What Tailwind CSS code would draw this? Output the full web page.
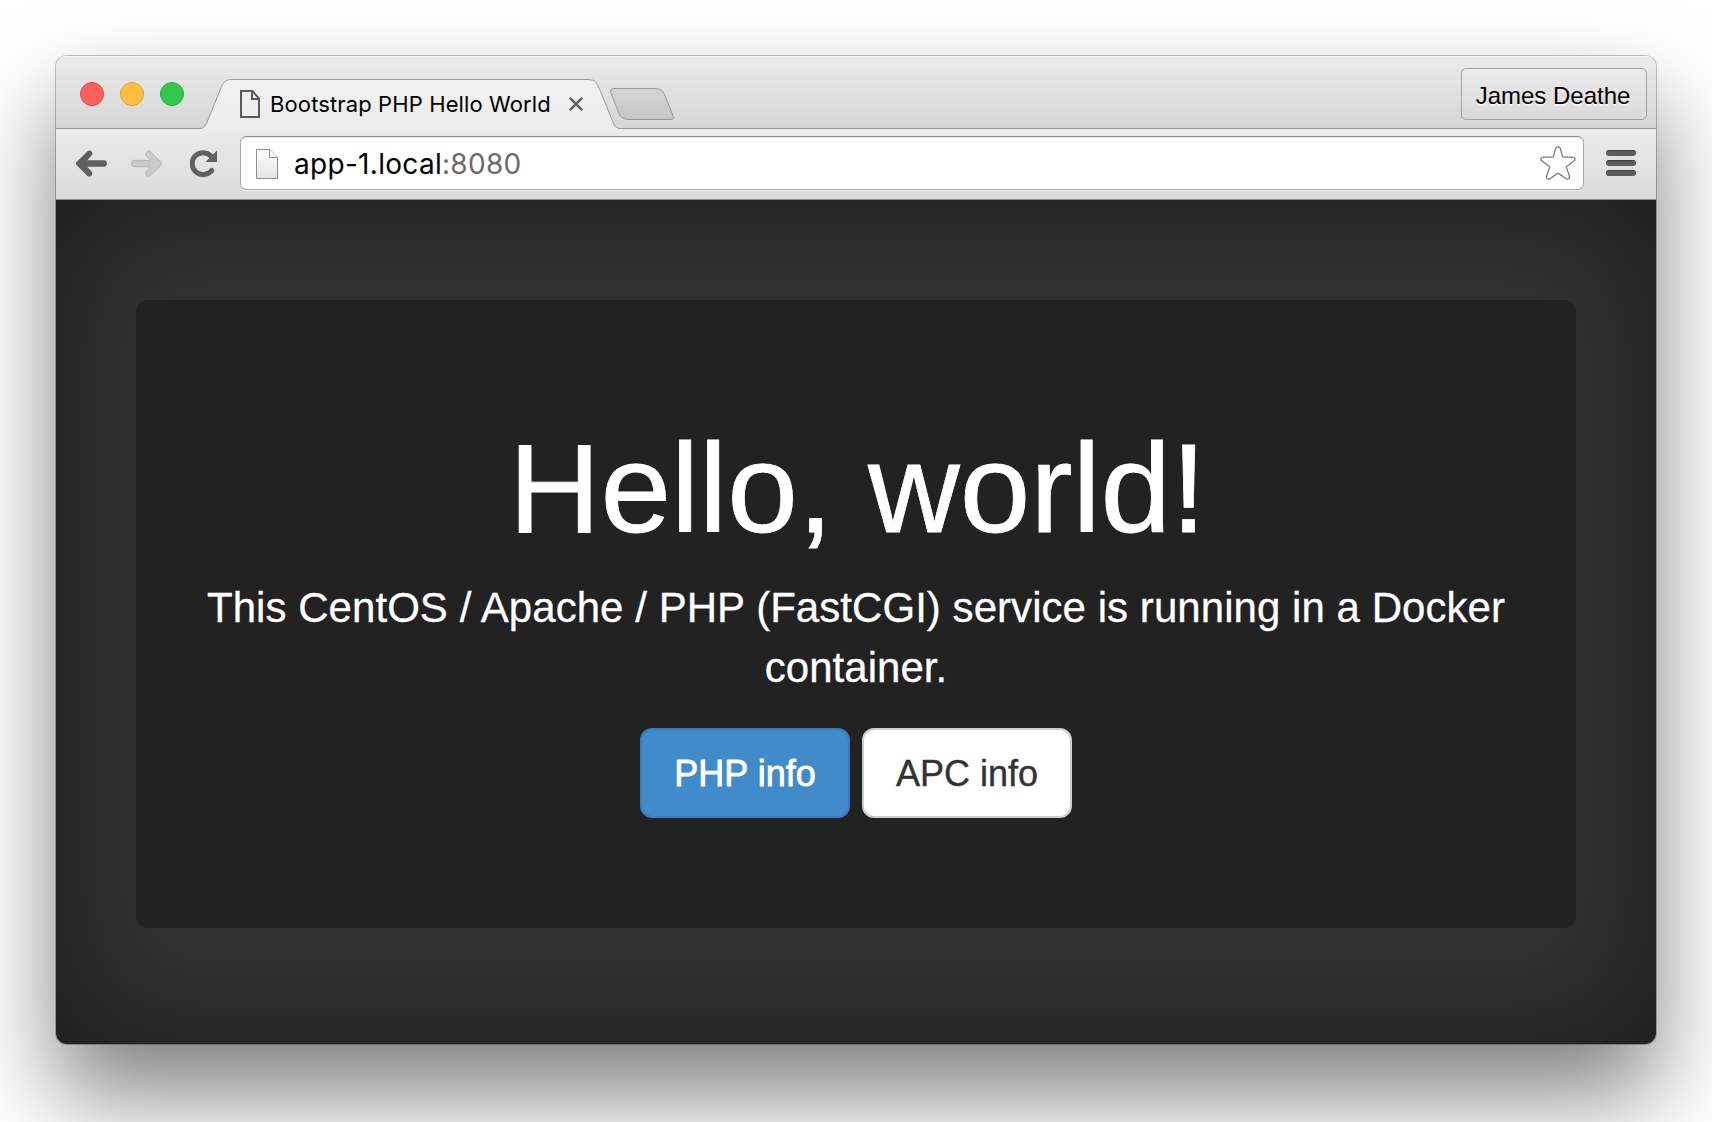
<!DOCTYPE html>
<html lang="en">
<head>
<meta charset="utf-8">
<title>Bootstrap PHP Hello World</title>
<script src="https://cdn.jsdelivr.net/npm/@tailwindcss/browser@4"></script>
</head>
<body class="h-[1122px] overflow-hidden bg-white px-14 pt-14">
<div class="flex h-[988px] w-[1600px] flex-col overflow-hidden rounded-[11px] shadow-[0_0_0_1px_rgba(0,0,0,0.24),0_50px_94px_rgba(0,0,0,0.5)]">

  <!-- title bar -->
  <header class="flex h-[73px] shrink-0 border-b border-[#999] bg-linear-to-b from-[#ebebeb] to-[#d6d6d6] pr-[9px] shadow-[inset_0_1px_0_#f4f4f4]">
    <div class="flex w-[144px] shrink-0 gap-4 pt-[26px] pl-6">
      <span class="size-6 rounded-full border border-[#e2463f] bg-[#fc615d]"></span>
      <span class="size-6 rounded-full border border-[#e0a032] bg-[#fdbe41]"></span>
      <span class="size-6 rounded-full border border-[#29ae36] bg-[#34c84a]"></span>
    </div>
    <div class="relative h-[73px] w-[422px] shrink-0">
      <svg class="absolute top-0 left-0" width="480" height="73" viewBox="200 56 480 73" fill="none">
        <defs>
          <linearGradient id="tab" x1="0" y1="80" x2="0" y2="129" gradientUnits="userSpaceOnUse"><stop stop-color="#f2f2f2"/><stop offset="1" stop-color="#ebebeb"/></linearGradient>
          <linearGradient id="nt" x1="0" y1="88" x2="0" y2="120" gradientUnits="userSpaceOnUse"><stop stop-color="#d3d3d3"/><stop offset="1" stop-color="#c8c8c8"/></linearGradient>
        </defs>
        <path d="M200 128.500C204 128.500 205.500 125.500 207.500 121L220.500 89C223.500 82 225.500 79.500 232 79.500H588C594.500 79.500 596.500 82 599.500 89L612.500 121C614.500 125.500 616 128.500 620 128.500V130H200Z" fill="url(#tab)"/>
        <path d="M200 128.500C204 128.500 205.500 125.500 207.500 121L220.500 89C223.500 82 225.500 79.500 232 79.500H588C594.500 79.500 596.500 82 599.500 89L612.500 121C614.500 125.500 616 128.500 620 128.500" stroke="#999"/>
        <path d="M614 88.500H655C660 88.500 662.500 90.500 664.500 94.500L673 115.500C674 118 673.500 119.500 671 119.500H629C623.500 119.500 621 117.500 619 113.500L611 93C610 90 611 88.500 614 88.500Z" fill="url(#nt)" stroke="#999"/>
      </svg>
      <div class="relative mt-[23px] flex h-[49px] items-center pl-10">
        <svg class="shrink-0" width="20" height="28" viewBox="0 0 20 28" fill="none" stroke="#5a5a5a" stroke-width="2"><path d="M1 1H12.500L19 8.500V27H1Z"/><path d="M12 1V9H19"/></svg>
        <span class="ml-[10px] w-[299px] whitespace-nowrap font-['Inter'] text-[22px] leading-7 tracking-[0.12px] text-black">Bootstrap PHP Hello World</span>
        <svg class="shrink-0" width="14" height="14" viewBox="0 0 14 14" stroke="#666" stroke-width="2.500" stroke-linecap="round"><path d="M1.500 1.500L12.500 12.500M12.500 1.500L1.500 12.500"/></svg>
      </div>
    </div>
    <button class="mt-3 ml-auto h-[52px] w-[186px] rounded-[5px] border border-[#a0a0a0] bg-linear-to-b from-[#ebebeb] to-[#dadada] pt-[4px] pr-[2px] font-['Liberation_Sans'] text-[24px] whitespace-nowrap text-black [text-shadow:0_2px_0_#f4f4f4]">James Deathe</button>
  </header>

  <!-- toolbar -->
  <nav class="flex h-[71px] shrink-0 items-start border-b border-[#8a8a8a] bg-linear-to-b from-[#ebebeb] to-[#dbdbdb] pt-[7px] pl-5">
    <svg class="mt-3.5 shrink-0" width="31" height="28" viewBox="0 0 31 28" fill="#606060"><path d="M.4 12.200L11.500 1.200C13.500-.600 16.800 1.200 16.300 4.200C16.200 5 15.700 5.600 15.200 6.100L11.300 10.300H28Q31 10.500 31 13.500Q31 16.600 28 16.800H11.300L15.200 21C15.700 21.500 16.200 22.100 16.300 22.900C16.800 25.900 13.500 27.700 11.500 25.900L.4 14.900Q-.800 13.500 .4 12.200Z"/></svg>
    <svg class="mt-3.5 ml-6 shrink-0" width="31" height="28" viewBox="-.500 0 32 28" fill="#cbcbcb" stroke="#b4b4b4"><path transform="matrix(-1 0 0 1 31 0)" d="M.4 12.200L11.500 1.200C13.500-.600 16.800 1.200 16.300 4.200C16.200 5 15.700 5.600 15.200 6.100L11.300 10.300H28Q31 10.500 31 13.500Q31 16.600 28 16.800H11.300L15.200 21C15.700 21.500 16.200 22.100 16.300 22.900C16.800 25.900 13.500 27.700 11.500 25.900L.4 14.900Q-.800 13.500 .4 12.200Z"/></svg>
    <svg class="mt-3.5 ml-7 shrink-0" width="28" height="28" viewBox="0 0 28 28" fill="none"><path d="M21.700 20.500A11 11 0 1 1 21 6" stroke="#606060" stroke-width="5" stroke-linecap="round"/><path d="M27 .500V12H15.500Z" fill="#606060"/></svg>
    <div class="ml-[22px] flex h-[54px] w-[1344px] shrink-0 items-center rounded-[6px] border border-[#a6a6a6] border-t-[#8f8f8f] bg-white pr-[7px] pl-[15px] shadow-[0_1px_0_#f2f2f2,inset_0_1px_0_#e8e8e8]">
      <svg class="mt-px shrink-0" width="22" height="30" viewBox="0 0 22 30"><defs><linearGradient id="pg" x1="0" y1="0" x2="0" y2="1"><stop stop-color="#fff"/><stop offset="1" stop-color="#e4e4e4"/></linearGradient></defs><path d="M.500 .500H14L21.500 8.500V29.500H.500Z" fill="url(#pg)" stroke="#8f8f8f"/><path d="M13.500 .500V8.500H21.500" fill="#fff" stroke="#8f8f8f"/></svg>
      <span class="ml-4 pt-[2px] whitespace-nowrap font-['Inter'] text-[28px] leading-8 tracking-[0.3px] text-black">app-1.local<span class="text-[#6b6b6b]">:8080</span></span>
      <svg class="ml-auto shrink-0" width="36" height="34" viewBox="0 0 36 34" fill="#fff" stroke="#7c7c7c" stroke-width="1.300" stroke-linejoin="round"><path d="M15.600 2.600Q18-1.200 20.400 2.600L22.500 10.400Q22.800 11.200 23.700 11.200H32.500Q36.600 12 34 15L26.800 20.200Q26.200 20.700 26.400 21.400L29.500 30.300Q29.600 34 26 32.800L18.800 27.600Q18 27.200 17.200 27.600L10 32.800Q6.400 34 6.500 30.300L9.600 21.400Q9.800 20.700 9.200 20.200L2 15Q-.600 12 3.500 11.200H12.300Q13.200 11.200 13.500 10.400Z"/></svg>
    </div>
    <div class="mt-3.5 ml-[22px] flex flex-col gap-1">
      <span class="h-1.5 w-[30px] rounded-full border-t border-[#404040] bg-[#5c5c5c]"></span>
      <span class="h-1.5 w-[30px] rounded-full border-t border-[#404040] bg-[#5c5c5c]"></span>
      <span class="h-1.5 w-[30px] rounded-full border-t border-[#404040] bg-[#5c5c5c]"></span>
    </div>
  </nav>

  <!-- page -->
  <main class="grow bg-[#333] px-20 pt-[100px] font-['Liberation_Sans'] shadow-[inset_0_0_140px_rgba(0,0,0,0.5)]">
    <section class="h-[628px] rounded-xl bg-[#222] pt-[118px] text-center text-white">
      <h1 class="pl-[3px] text-[127px] leading-[140px] tracking-[-0.1px] whitespace-nowrap [-webkit-text-stroke:0.8px_white]">Hello, world!</h1>
      <p class="mt-5 text-[42px] leading-[60px] tracking-[0.05px] whitespace-nowrap [-webkit-text-stroke:0.3px_white]">This CentOS / Apache / PHP (FastCGI) service is running in a Docker<br>container.</p>
      <div class="mt-[30px] flex justify-center gap-3">
        <a class="h-[90px] w-[210px] rounded-xl border-2 border-[#357ebd] bg-[#428bca] text-[36px] leading-[88px] whitespace-nowrap [-webkit-text-stroke:0.8px_white]">PHP info</a>
        <a class="h-[90px] w-[210px] rounded-xl border-2 border-[#ccc] bg-white text-[36px] leading-[88px] whitespace-nowrap text-[#333] [-webkit-text-stroke:0.4px_#333]">APC info</a>
      </div>
    </section>
  </main>
</div>
</body>
</html>
